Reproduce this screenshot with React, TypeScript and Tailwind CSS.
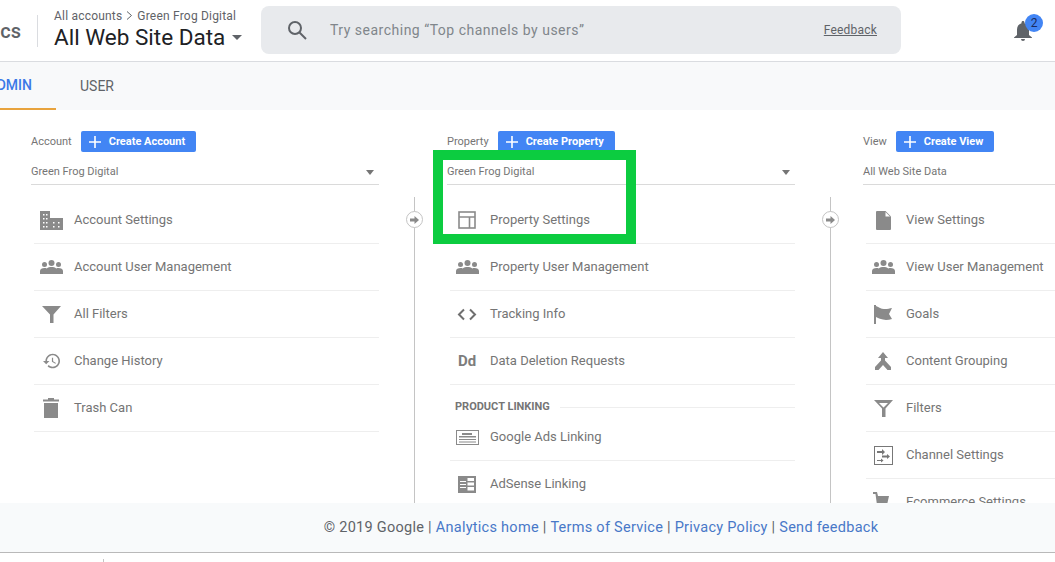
import React from 'react';

const G = '#8a8a8a';

const Users = () => (
  <svg width="23" height="14" viewBox="0 0 23 14" fill={G}>
    <circle cx="11.5" cy="3" r="3" />
    <circle cx="4.5" cy="4.5" r="2.5" />
    <circle cx="18.5" cy="4.5" r="2.5" />
    <path d="M0 14v-3c0-2 2-3 4.500-3 .8 0 1.600.1 2.200.4C8 7.500 9.700 7 11.500 7s3.500.5 4.800 1.400c.6-.3 1.400-.4 2.200-.4 2.500 0 4.500 1 4.500 3v3z" />
  </svg>
);

const Building = () => (
  <svg width="23" height="19" viewBox="0 0 23 19">
    <path fill={G} d="M0 0h10v7h13v12H0z" />
    <g fill="#fff">
      <rect x="3" y="3" width="1.500" height="1.500" /><rect x="6" y="3" width="1.500" height="1.500" />
      <rect x="3" y="7" width="1.500" height="1.500" /><rect x="6" y="7" width="1.500" height="1.500" />
      <rect x="3" y="11" width="1.500" height="1.500" /><rect x="6" y="11" width="1.500" height="1.500" />
      <rect x="3" y="15" width="1.500" height="1.500" /><rect x="6" y="15" width="1.500" height="1.500" />
      <rect x="13" y="11" width="1.500" height="1.500" /><rect x="18" y="11" width="1.500" height="1.500" />
      <rect x="13" y="15" width="1.500" height="1.500" /><rect x="18" y="15" width="1.500" height="1.500" />
    </g>
  </svg>
);

const Funnel = () => (
  <svg width="19" height="17" viewBox="0 0 19 17" fill={G}>
    <path d="M0 0h19l-7.500 8.500V17h-3.500V8.500z" />
  </svg>
);

const FunnelOpen = () => (
  <svg width="19" height="17" viewBox="0 0 19 17" fill={G}>
    <path fillRule="evenodd" d="M0 0h19l-7.500 8.500V17h-3.500V8.500zM5 3l4.500 4.500L14 3z" />
  </svg>
);

const History = () => (
  <svg width="17" height="16" viewBox="1 3 21 18" fill={G}>
    <path d="M13 3c-4.970 0-9 4.030-9 9H1l3.890 3.890.07.140L9 12H6c0-3.870 3.130-7 7-7s7 3.130 7 7-3.130 7-7 7c-1.930 0-3.680-.79-4.940-2.060l-1.420 1.420C8.270 19.990 10.510 21 13 21c4.970 0 9-4.030 9-9s-4.030-9-9-9zm-1 5v5l4.280 2.540.72-1.210-3.500-2.080V8H12z" />
  </svg>
);

const Trash = () => (
  <svg width="16" height="20" viewBox="0 0 16 20" fill={G}>
    <path d="M5 0h6v1.500h5V3.500H0V1.500h5z" />
    <path d="M1 5h14v15H1z" />
  </svg>
);

const Layout = () => (
  <svg width="18" height="18" viewBox="0 0 18 18" fill="none" stroke={G} strokeWidth="1.600">
    <rect x="1" y="1" width="16" height="16" />
    <path d="M1 6h16M11.500 6v11" />
  </svg>
);

const Code = () => (
  <svg width="20" height="13" viewBox="0 0 20 13" fill="none" stroke="#6f6f6f" strokeWidth="2">
    <path d="M7 1.500 2 6.500l5 5M13 1.500l5 5-5 5" />
  </svg>
);

const AdsIcon = () => (
  <svg width="23" height="15" viewBox="0 0 23 15" fill="none">
    <rect x=".5" y=".5" width="22" height="14" stroke={G} />
    <path d="M6 3h10v2H6z" fill={G} />
    <path d="M3 6h17v1.500H3zM3 9h17v1H3zM3 11.500h17v1H3z" fill={G} />
  </svg>
);

const AdSense = () => (
  <svg width="18" height="17" viewBox="0 0 18 17">
    <path fill={G} d="M0 0h18v17H0z" />
    <path fill="#fff" d="M9.500 2H16v3H9.500zM9.500 6.500H16v3H9.500zM9.500 11H16v3.500H9.500zM2 5h6v1H2zM2 8h6v1H2zM2 11h6v1H2z" />
  </svg>
);

const Doc = () => (
  <svg width="15" height="19" viewBox="0 0 15 19" fill={G}>
    <path d="M1 0h8.500L15 5.500V18a1 1 0 0 1-1 1H1a1 1 0 0 1-1-1V1a1 1 0 0 1 1-1z" />
    <path d="M9.500 1v4.500H14z" fill="#fff" />
  </svg>
);

const Flag = () => (
  <svg width="18" height="19" viewBox="0 0 18 19" fill={G}>
    <path d="M0 0h2v1c3 1 5 3 8 3 3 .2 5.500-.5 8-1l-3 6 3 5c-3 .8-6 1.200-9 .6-3-.6-5-1.600-7-2.600v7H0z" />
  </svg>
);

const Merge = () => (
  <svg width="16" height="18" viewBox="0 0 16 18" fill={G}>
    <path d="M8 0l5 6H10v2.500L16 15v3h-3.500L8 13l-4.500 5H0v-3l6-6.500V6H3z" />
  </svg>
);

const Channel = () => (
  <svg width="19" height="19" viewBox="0 0 19 19" fill="none">
    <rect x=".5" y=".5" width="18" height="18" stroke="#777" />
    <path d="M3 5h5V3l3 3-3 3V7H3zM8 9.500h5v-1.500l3 2.500-3 2.500v-1.500H8zM3 14h4v-1.500l2.500 2-2.500 2V15H3z" fill="#777" />
  </svg>
);

const Cart = () => (
  <svg width="16" height="20" viewBox="0 0 16 20" fill={G} className="-ml-[4px]">
    <path d="M0 0h4l1 4h11l-2 9H4L2.500 2H0z" />
  </svg>
);

const Dd = () => <span className="text-[15px] font-bold text-[#7d7d7d]">Dd</span>;

const accountRows = [
  { icon: <Building />, label: 'Account Settings' },
  { icon: <Users />, label: 'Account User Management' },
  { icon: <Funnel />, label: 'All Filters' },
  { icon: <History />, label: 'Change History' },
  { icon: <Trash />, label: 'Trash Can' },
];

const viewRows = [
  { icon: <Doc />, label: 'View Settings' },
  { icon: <Users />, label: 'View User Management' },
  { icon: <Flag />, label: 'Goals' },
  { icon: <Merge />, label: 'Content Grouping' },
  { icon: <FunnelOpen />, label: 'Filters' },
  { icon: <Channel />, label: 'Channel Settings' },
  { icon: <Cart />, label: 'Ecommerce Settings' },
];

const Row = ({ icon, label }: { icon: React.ReactNode; label: string }) => (
  <div className="ml-[3px] flex h-[47px] items-center border-b border-[#eeeeee]">
    <div className="flex w-[34px] shrink-0 items-center justify-center">{icon}</div>
    <span className="ml-[6px] text-[13px] text-[#757575]">{label}</span>
  </div>
);

const Column = ({ title, button, value, hideCaret, children }: {
  title: string;
  button: string;
  value: string;
  hideCaret?: boolean;
  children: React.ReactNode;
}) => (
  <div className="w-[348px] shrink-0">
    <div className="flex h-[21px] items-center">
      <span className="mr-[9px] pt-px text-[11px] text-[#757575]">{title}</span>
      <div className="flex h-[21px] items-center rounded-[2px] bg-[#4285f4] pl-[7px] pr-[11px] pt-px text-[11px] font-bold text-white">
        <svg width="14" height="14" viewBox="0 0 14 14" stroke="#fff" strokeWidth="1.600" className="mr-[7px]">
          <path d="M7 1v12M1 7h12" />
        </svg>
        {button}
      </div>
    </div>
    <div className="flex h-[33px] items-center justify-between border-b border-[#dadada] pt-[9px] text-[11px] text-[#757575]">
      <span>{value}</span>
      {!hideCaret && <span className="mr-[5px] h-0 w-0 border-x-[4px] border-t-[5px] border-x-transparent border-t-[#757575]" />}
    </div>
    <div className="mt-[12px]">{children}</div>
  </div>
);

const Rail = () => (
  <div className="w-[68px] shrink-0 pl-[35px] pt-[66px]">
    <div className="relative h-[400px] w-px bg-[#c4c4c4]">
      <div className="absolute left-[-8px] top-[14px] flex h-[17px] w-[17px] items-center justify-center rounded-full border border-[#c4c4c4] bg-white">
        <svg width="9" height="8" viewBox="0 0 9 8" fill="#8a8a8a"><path d="M0 2.500h4.500V0L9 4 4.500 8V5.500H0z" /></svg>
      </div>
    </div>
  </div>
);

const App: React.FC = () => {
  return (
    <div className="relative flex h-[562px] w-[1055px] flex-col overflow-hidden bg-white font-['Roboto',sans-serif]">
      <header className="flex h-[62px] shrink-0 items-center border-b border-[#dadce0] bg-white">
        <div className="flex w-[21px] shrink-0 justify-end overflow-hidden text-[20px] font-medium text-[#5f6368]">
          <span className="whitespace-nowrap">Analytics</span>
        </div>
        <div className="ml-[16px] h-[32px] w-px shrink-0 bg-[#dadce0]" />
        <div className="ml-[16px] w-[207px] shrink-0 pb-[4px]">
          <div className="flex items-center text-[12px] leading-[16px] tracking-[0.2px] text-[#5f6368]">
            All accounts
            <svg width="7" height="9" viewBox="0 0 7 9" fill="none" stroke="#5f6368" className="mx-[4px]"><path d="M1 .5l4.500 4L1 8.500" /></svg>
            Green Frog Digital
          </div>
          <div className="flex items-center whitespace-nowrap text-[22.5px] leading-[26px] text-[#202124]">
            All Web Site Data
            <span className="ml-[7px] mt-[2px] h-0 w-0 border-x-[5px] border-t-[5px] border-x-transparent border-t-[#5f6368]" />
          </div>
        </div>
        <div className="flex h-[48px] w-[640px] shrink-0 -translate-y-[1px] items-center rounded-[8px] bg-[#e8eaed] pl-[26px] pr-[24px]">
          <svg width="20" height="20" viewBox="0 0 20 20" fill="none" stroke="#5f6368" strokeWidth="2">
            <circle cx="8" cy="8" r="6" />
            <path d="M12.500 12.500 19 19" />
          </svg>
          <span className="ml-[23px] pt-px text-[14px] tracking-[0.5px] text-[#80868b]">Try searching “Top channels by users”</span>
          <span className="ml-auto text-[12px] tracking-[0.2px] text-[#5f6368] underline">Feedback</span>
        </div>
        <div className="relative ml-[113px] h-[24px] w-[18px]">
          <svg width="18" height="21" viewBox="0 0 18 21" fill="#5f6368" className="absolute top-[2px]">
            <path d="M9 0c1 0 1.500.7 1.500 1.500v.7C13.500 3 15 5.500 15 8.500V14l3 2.500V17H0v-.5L3 14V8.500c0-3 1.500-5.500 4.500-6.300v-.7C7.500.7 8 0 9 0zM7 18h4a2 2 0 0 1-4 0z" />
          </svg>
          <span className="absolute left-[11px] top-[-5px] flex h-[18px] w-[18px] items-center justify-center rounded-full bg-[#4285f4] text-[12px] text-[#1a2a5e]">2</span>
        </div>
      </header>

      <nav className="flex h-[48px] shrink-0 items-center bg-[#f8f9fa]">
        <div className="flex h-full w-[56px] items-center justify-end overflow-hidden border-b-[2px] border-[#e8a33d] pr-[24px] text-[14px] font-medium text-[#3b78e7]">
          <span>ADMIN</span>
        </div>
        <span className="ml-[24px] text-[14px] text-[#5f6368]">USER</span>
      </nav>

      <main className="flex h-[393px] shrink-0 overflow-hidden pl-[31px] pt-[21px]">
        <Column title="Account" button="Create Account" value="Green Frog Digital">
          {accountRows.map((r) => <Row key={r.label} icon={r.icon} label={r.label} />)}
        </Column>
        <Rail />
        <Column title="Property" button="Create Property" value="Green Frog Digital">
          <Row icon={<Layout />} label="Property Settings" />
          <Row icon={<Users />} label="Property User Management" />
          <Row icon={<Code />} label="Tracking Info" />
          <Row icon={<Dd />} label="Data Deletion Requests" />
          <div className="ml-[8px] mt-[14px] flex h-[16px] items-center">
            <span className="text-[11px] font-bold text-[#757575]">PRODUCT LINKING</span>
            <div className="ml-[10px] h-px flex-1 bg-[#eeeeee]" />
          </div>
          <div className="-mt-[1px]">
            <Row icon={<AdsIcon />} label="Google Ads Linking" />
            <Row icon={<AdSense />} label="AdSense Linking" />
          </div>
        </Column>
        <Rail />
        <Column title="View" button="Create View" value="All Web Site Data" hideCaret>
          {viewRows.map((r) => <Row key={r.label} icon={r.icon} label={r.label} />)}
        </Column>
      </main>

      <footer className="flex h-[50px] shrink-0 items-center justify-center border-b border-[#b9b9b9] bg-[#f8fafb] pl-[147px] text-[14.5px] tracking-[0.27px] text-[#5f6368]">
        © 2019 Google |&nbsp;<span className="text-[#4878c8]">Analytics home</span>&nbsp;|&nbsp;
        <span className="text-[#4878c8]">Terms of Service</span>&nbsp;|&nbsp;
        <span className="text-[#4878c8]">Privacy Policy</span>&nbsp;|&nbsp;
        <span className="text-[#4878c8]">Send feedback</span>
      </footer>

      <div className="flex-1 pl-[103px] pt-[6px]"><div className="h-full w-px bg-[#c4c4c4]" /></div>

      {/* green highlight drawn over the property column */}
      <div className="pointer-events-none absolute left-[433px] top-[150px] h-[94px] w-[203px] border-[10px] border-[#0ccc40]" />
    </div>
  );
};

export default App;
